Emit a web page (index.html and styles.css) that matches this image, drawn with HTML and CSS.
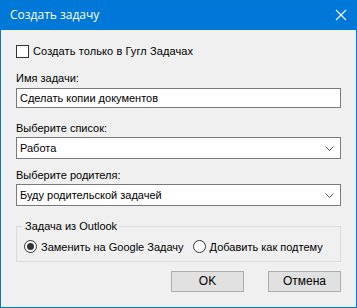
FILE: index.html
```html
<!DOCTYPE html>
<html>
	<head>
		<meta charset="utf-8">
		<link rel="stylesheet" href="styles.css">
	</head>
	<body>
		<div class="window">
			<div class="titlebar">
				<span class="title">Создать задачу</span>
				<svg class="close" width="12" height="12" viewBox="0 0 12 12">
					<path d="M1 1 L11 11 M11 1 L1 11" stroke="#fff" stroke-width="1.1" fill="none"/>
				</svg>
			</div>
			<div class="content">
				<div class="check-row">
					<span class="checkbox"></span>
					<span>Создать только в Гугл Задачах</span>
				</div>

				<div class="label">Имя задачи:</div>
				<div class="textbox">Сделать копии документов</div>

				<div class="label">Выберите список:</div>
				<div class="combo">
					<span>Работа</span>
					<svg width="9" height="5" viewBox="0 0 9 5"><polyline points="0.5,0.5 4.5,4.5 8.5,0.5" stroke="#555" fill="none"/></svg>
				</div>

				<div class="label">Выберите родителя:</div>
				<div class="combo">
					<span>Буду родительской задачей</span>
					<svg width="9" height="5" viewBox="0 0 9 5"><polyline points="0.5,0.5 4.5,4.5 8.5,0.5" stroke="#555" fill="none"/></svg>
				</div>

				<fieldset class="group">
					<legend>Задача из Outlook</legend>
					<div class="radio-row">
						<span class="radio checked"></span>
						<span class="radio-text">Заменить на Google Задачу</span>
						<span class="radio"></span>
						<span class="radio-text">Добавить как подтему</span>
					</div>
				</fieldset>

				<div class="buttons">
					<div class="btn">OK</div>
					<div class="btn">Отмена</div>
				</div>
			</div>
		</div>
	</body>
</html>
```

FILE: styles.css
```css
body{
	margin:0;
	font-family:"Liberation Sans", Arial, sans-serif;
	font-size:11px;
	color:#000;
}

.window{
	box-sizing:border-box;
	width:357px;
	height:308px;
	border:1px solid #0078d7;
	border-top:none;
	background:#f0f0f0;
}

.titlebar{
	height:30px;
	margin:0 -1px;
	background:#0078d7;
	color:#fff;
	display:flex;
	align-items:center;
	justify-content:space-between;
	padding:0 10px 0 10px;
}

.title{
	font-family:"Open Sans", "Noto Sans", sans-serif;
	font-size:12px;
	margin-top:-1px;
}

.content{
	padding:15px 15px 0 15px;
	display:flex;
	flex-direction:column;
}

.check-row{
	display:flex;
	align-items:center;
	height:13px;
	line-height:13px;
	letter-spacing:0.1px;
}

.checkbox{
	box-sizing:border-box;
	width:13px;
	height:13px;
	border:1px solid #333;
	background:#fff;
	margin-right:4px;
}

.label{
	line-height:13px;
	margin-top:14px;
	color:#000;
}

.textbox{
	box-sizing:border-box;
	height:20px;
	margin-top:3px;
	border:1px solid #7a7a7a;
	background:#fff;
	padding:0 3px;
	line-height:18px;
}

.combo{
	box-sizing:border-box;
	height:22px;
	margin-top:2px;
	border:1px solid #7a7a7a;
	background:#fff;
	padding:0 6px 0 3px;
	display:flex;
	align-items:center;
	justify-content:space-between;
}

.combo + .label{
	margin-top:10px;
}

.group{
	margin:14px 0 0 0;
	padding:0 0 0 7px;
	border:1px solid #dcdcdc;
	height:42px;
	box-sizing:border-box;
	min-width:0;
}

.group legend{
	padding:0 2px;
	margin-left:-1px;
	line-height:13px;
}

.radio-row{
	display:flex;
	align-items:center;
	margin-top:7px;
	white-space:nowrap;
}

.radio{
	box-sizing:border-box;
	flex-shrink:0;
	width:13px;
	height:13px;
	border:1px solid #333;
	border-radius:50%;
	background:#fff;
	display:flex;
	align-items:center;
	justify-content:center;
	margin-right:4px;
}

.radio.checked::after{
	content:"";
	width:7px;
	height:7px;
	border-radius:50%;
	background:#333;
}

.radio-text{
	margin-right:9px;
}

.buttons{
	display:flex;
	justify-content:flex-end;
	gap:24px;
	margin-top:9px;
}

.btn{
	box-sizing:border-box;
	width:73px;
	height:21px;
	border:1px solid #adadad;
	background:#e1e1e1;
	text-align:center;
	line-height:19px;
	font-size:12px;
}
```
